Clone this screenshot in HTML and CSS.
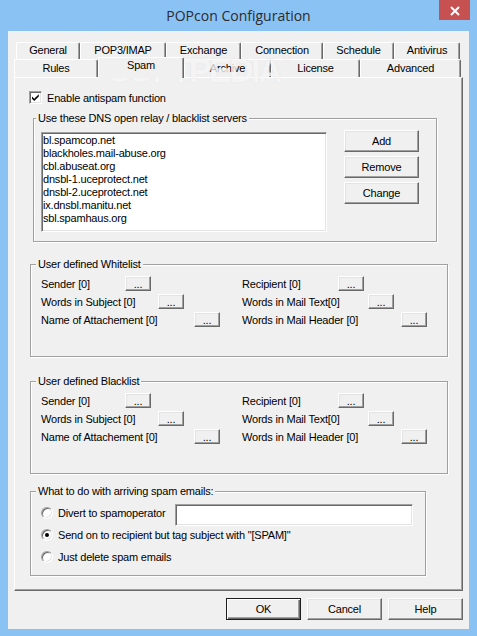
FILE: index.html
```html
<!DOCTYPE html>
<html>
<head>
<meta charset="utf-8">
<title>POPcon Configuration</title>
<link rel="stylesheet" href="styles.css">
</head>
<body>
<div class="window">
  <div class="titlebar">
    <div class="title">POPcon Configuration</div>
    <div class="close"><svg width="31" height="20" viewBox="0 0 31 20"><path d="M12 7 L20 15 M20 7 L12 15" stroke="#fff" stroke-width="2" fill="none"/></svg></div>
  </div>
  <div class="client">
    <div class="tabrow row1">
      <div class="tab t-general">General</div>
      <div class="tab t-pop">POP3/IMAP</div>
      <div class="tab t-exchange">Exchange</div>
      <div class="tab t-connection">Connection</div>
      <div class="tab t-schedule">Schedule</div>
      <div class="tab t-antivirus">Antivirus</div>
    </div>
    <div class="tabrow row2">
      <div class="tab t-rules">Rules</div>
      <div class="tab t-spam sel">Spam</div>
      <div class="tab t-archive">Archive</div>
      <div class="tab t-license">License</div>
      <div class="tab t-advanced">Advanced</div>
    </div>
    <div class="panel">
      <div class="check-row">
        <span class="checkbox"><svg width="9" height="9" viewBox="0 0 9 9"><path d="M1 3.6 L3.2 5.8 L7.8 1.2 L7.8 3.4 L3.2 8 L1 5.8 Z" fill="#000"/></svg></span>
        <span>Enable antispam function</span>
      </div>

      <div class="group g-dns">
        <div class="legend">Use these DNS open relay / blacklist servers</div>
        <div class="dns-body">
          <div class="listbox">
            <div>bl.spamcop.net</div>
            <div>blackholes.mail-abuse.org</div>
            <div>cbl.abuseat.org</div>
            <div>dnsbl-1.uceprotect.net</div>
            <div>dnsbl-2.uceprotect.net</div>
            <div>ix.dnsbl.manitu.net</div>
            <div>sbl.spamhaus.org</div>
          </div>
          <div class="btn-col">
            <button class="btn">Add</button>
            <button class="btn">Remove</button>
            <button class="btn">Change</button>
          </div>
        </div>
      </div>

      <div class="group g-list">
        <div class="legend">User defined Whitelist</div>
        <div class="grid">
          <div class="item"><span class="lbl l-sender">Sender [0]</span><button class="dots">...</button></div>
          <div class="item"><span class="lbl l-recipient">Recipient [0]</span><button class="dots">...</button></div>
          <div class="item"><span class="lbl l-subject">Words in Subject [0]</span><button class="dots">...</button></div>
          <div class="item"><span class="lbl l-text">Words in Mail Text[0]</span><button class="dots">...</button></div>
          <div class="item"><span class="lbl l-attach">Name of Attachement [0]</span><button class="dots">...</button></div>
          <div class="item"><span class="lbl l-header">Words in Mail Header [0]</span><button class="dots">...</button></div>
        </div>
      </div>

      <div class="group g-list g-black">
        <div class="legend">User defined Blacklist</div>
        <div class="grid">
          <div class="item"><span class="lbl l-sender">Sender [0]</span><button class="dots">...</button></div>
          <div class="item"><span class="lbl l-recipient">Recipient [0]</span><button class="dots">...</button></div>
          <div class="item"><span class="lbl l-subject">Words in Subject [0]</span><button class="dots">...</button></div>
          <div class="item"><span class="lbl l-text">Words in Mail Text[0]</span><button class="dots">...</button></div>
          <div class="item"><span class="lbl l-attach">Name of Attachement [0]</span><button class="dots">...</button></div>
          <div class="item"><span class="lbl l-header">Words in Mail Header [0]</span><button class="dots">...</button></div>
        </div>
      </div>

      <div class="group g-action">
        <div class="legend">What to do with arriving spam emails:</div>
        <div class="radios">
          <div class="radio-row">
            <span class="radio"></span>
            <span class="divert-label">Divert to spamoperator</span>
            <span class="textbox"></span>
          </div>
          <div class="radio-row">
            <span class="radio on"></span>
            <span>Send on to recipient but tag subject with "[SPAM]"</span>
          </div>
          <div class="radio-row">
            <span class="radio"></span>
            <span>Just delete spam emails</span>
          </div>
        </div>
      </div>
    </div>
    <div class="dlg-buttons">
      <button class="btn default">OK</button>
      <button class="btn">Cancel</button>
      <button class="btn">Help</button>
    </div>
  </div>
  <div class="watermark">SOFTPEDIA<span class="reg">®</span></div>
</div>
</body>
</html>
```

FILE: styles.css
```css
* { box-sizing: border-box; }
html, body { margin: 0; padding: 0; }
body {
  width: 477px;
  height: 636px;
  overflow: hidden;
  font-family: "Liberation Sans", Arial, sans-serif;
  font-size: 11px;
  letter-spacing: -0.2px;
  color: #000;
}
.window {
  position: relative;
  width: 477px;
  height: 636px;
  background: #8bc2f4;
  display: flex;
  flex-direction: column;
}
.titlebar {
  height: 31px;
  flex-shrink: 0;
  display: grid;
  grid-template-columns: 1fr auto 1fr;
}
.title {
  grid-column: 2;
  font-family: "Open Sans", "Noto Sans", sans-serif;
  font-size: 14px;
  letter-spacing: 0;
  line-height: 31px;
  color: #2b2b2b;
}
.close {
  grid-column: 3;
  justify-self: end;
  align-self: start;
  width: 31px;
  height: 20px;
  margin-right: 7px;
  background: #c75050;
}
.close svg { display: block; }
.client {
  margin: 0 8px;
  height: 598px;
  background: #f0f0f0;
  padding-top: 11px;
  display: flex;
  flex-direction: column;
}
.tabrow { display: flex; flex-shrink: 0; }
.row1 { height: 17px; margin-left: 8px; }
.row2 { height: 18px; margin-left: 6px; }
.tab {
  height: 100%;
  border: 1px solid;
  border-bottom: none;
  border-color: #fff #696969 #696969 #fff;
  box-shadow: inset -1px 0 #a0a0a0;
  border-radius: 2px 2px 0 0;
  text-align: center;
  line-height: 15px;
  white-space: nowrap;
  background: #f0f0f0;
}
.row2 .tab { line-height: 16px; }
.t-general { width: 64px; }
.t-pop { width: 86px; }
.t-exchange { width: 75px; }
.t-connection { width: 82px; }
.t-schedule { width: 71px; }
.t-antivirus { width: 66px; }
.t-rules { width: 84px; }
.t-spam { width: 86px; }
.t-archive { width: 87px; }
.t-license { width: 89px; }
.t-advanced { width: 101px; }
.row2 .tab.sel {
  height: 21px;
  margin-top: -2px;
  position: relative;
  z-index: 1;
  line-height: 15px;
}
.panel {
  margin-left: 6px;
  width: 449px;
  height: 514px;
  flex-shrink: 0;
  border: 1px solid;
  border-color: #fff #696969 #696969 #fff;
  box-shadow: inset -1px -1px #a0a0a0;
  display: flex;
  flex-direction: column;
  align-items: flex-start;
}
.check-row {
  display: flex;
  align-items: center;
  gap: 5px;
  height: 13px;
  margin: 13px 0 0 14px;
}
.checkbox, .listbox, .textbox {
  background: #fff;
  border: 1px solid;
  border-color: #a0a0a0 #fff #fff #a0a0a0;
  box-shadow: inset 1px 1px #696969, inset -1px -1px #e3e3e3;
}
.checkbox {
  width: 13px;
  height: 13px;
  display: flex;
  align-items: center;
  justify-content: center;
}
.checkbox svg { display: block; }
.group {
  flex-shrink: 0;
  border: 1px solid #a0a0a0;
  box-shadow: inset 1px 1px #fff, 1px 1px #fff;
}
.legend {
  width: max-content;
  margin: -7px 0 0 5px;
  padding: 0 2px;
  line-height: 13px;
  background: #f0f0f0;
}
.g-dns { margin: 14px 0 0 18px; width: 404px; height: 124px; }
.g-dns .legend { margin-left: 2px; }
.dns-body { display: flex; align-items: flex-start; margin-top: 5px; }
.listbox {
  width: 286px;
  height: 100px;
  margin: 2px 0 0 7px;
  padding: 1px 0 0 1px;
  line-height: 13px;
}
.btn-col {
  display: flex;
  flex-direction: column;
  gap: 4px;
  margin-left: 17px;
}
.btn, .dots {
  font: inherit;
  letter-spacing: inherit;
  color: #000;
  padding: 0;
  margin: 0;
  background: #f0f0f0;
  border: 1px solid;
  border-color: #fff #696969 #696969 #fff;
  box-shadow: inset -1px -1px #a0a0a0, inset 1px 1px #e3e3e3;
}
.btn { width: 75px; height: 22px; }
.dots { width: 26px; height: 15px; line-height: 13px; padding-top: 1px; }
.g-list { margin: 22px 0 0 15px; width: 418px; height: 93px; }
.g-black { margin-top: 24px; }
.grid {
  display: grid;
  grid-template-columns: 201px auto;
  grid-auto-rows: 15px;
  row-gap: 3px;
  margin-top: 5px;
  padding-left: 10px;
}
.item { display: flex; align-items: center; }
.lbl { white-space: nowrap; }
.l-sender { width: 84px; }
.l-subject { width: 117px; }
.l-attach { width: 153px; }
.l-recipient { width: 96px; }
.l-text { width: 126px; }
.l-header { width: 159px; }
.g-action { margin: 17px 0 0 15px; width: 396px; height: 85px; }
.radios { margin-top: 4px; padding-left: 10px; }
.radio-row { display: flex; align-items: center; height: 22px; }
.radio {
  width: 12px;
  height: 12px;
  margin-right: 5px;
  border-radius: 50%;
  background: #fff;
  border: 1px solid;
  border-color: #a0a0a0 #fff #fff #a0a0a0;
  box-shadow: inset 1px 1px #696969, inset -1px -1px #e3e3e3;
  display: flex;
  align-items: center;
  justify-content: center;
}
.radio.on::after {
  content: "";
  width: 4px;
  height: 4px;
  border-radius: 50%;
  background: #000;
}
.divert-label { width: 117px; white-space: nowrap; }
.textbox {
  width: 238px;
  height: 22px;
  align-self: flex-start;
  margin-top: 2px;
}
.dlg-buttons {
  display: flex;
  justify-content: flex-end;
  gap: 6px;
  margin: 7px 6px 0 0;
}
.btn.default {
  border-color: #1e1e1e;
  box-shadow: inset 1px 1px #fff, inset -1px -1px #696969, inset -2px -2px #a0a0a0;
}
.watermark {
  position: absolute;
  left: 108px;
  top: 53px;
  font-family: "Liberation Sans", Arial, sans-serif;
  font-weight: bold;
  font-size: 34px;
  line-height: 1;
  letter-spacing: -2.5px;
  color: rgba(255, 255, 255, 0.72);
  text-shadow: 0 0 1px rgba(150, 150, 150, 0.25);
  pointer-events: none;
  white-space: nowrap;
}
.watermark .reg {
  font-size: 10px;
  letter-spacing: 0;
  vertical-align: top;
  margin-left: 3px;
}
```
